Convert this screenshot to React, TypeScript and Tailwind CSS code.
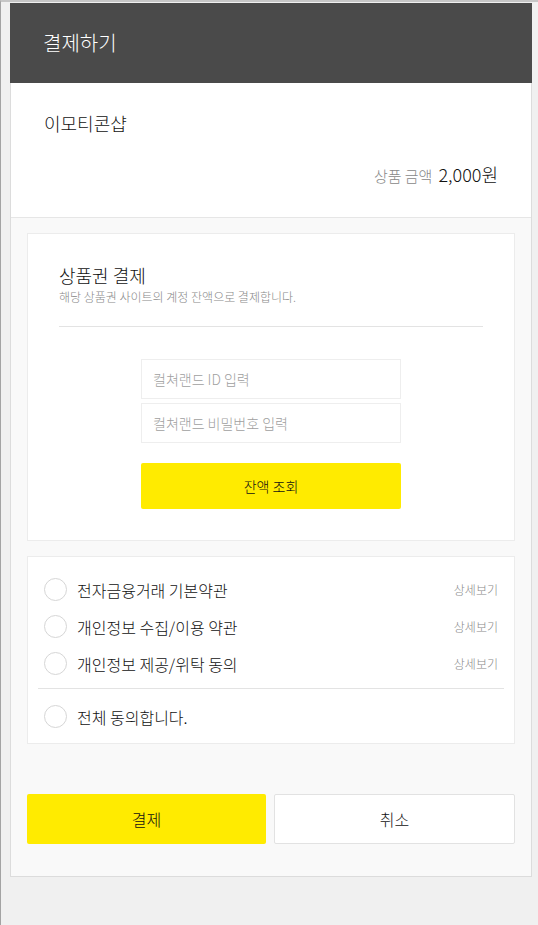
const font = { fontFamily: '"Noto Sans CJK KR", "Noto Sans", sans-serif' };

interface TermItem {
  label: string;
  detail?: boolean;
}

const terms: TermItem[] = [
  { label: "전자금융거래 기본약관", detail: true },
  { label: "개인정보 수집/이용 약관", detail: true },
  { label: "개인정보 제공/위탁 동의", detail: true },
];

function Circle() {
  return <span className="w-[23px] h-[23px] rounded-full border border-[#d6d6d6] bg-white shrink-0" />;
}

function TermRow({ item }: { item: TermItem }) {
  return (
    <div className="flex items-center h-[37px] px-4">
      <Circle />
      <span className="ml-[10px] text-[16px] leading-[20px] text-[#111] font-light">{item.label}</span>
      {item.detail && <span className="ml-auto text-[12px] leading-[16px] text-[#888] font-light">상세보기</span>}
    </div>
  );
}

export default function App() {
  return (
    <div
      style={font}
      className="min-h-[925px] bg-[#f0f0f0] border-l border-l-[#a3a3a3] border-t-2 border-t-[#c6c6c6] pt-px pl-[9px]"
    >
      <div className="w-[522px]">
        <header className="h-[80px] bg-[#4a4a4a] flex items-center pl-[33px]">
          <h1 className="text-white text-[20px] leading-[24px] font-light">결제하기</h1>
        </header>

        <div className="border-x border-b border-[#dcdcdc] bg-[#f9f9f9]">
          <section className="bg-white border-b border-[#e6e6e6] px-[33px] pt-[28px] pb-[31px]">
            <div className="text-[18px] leading-[24px] text-[#111] font-light">이모티콘샵</div>
            <div className="mt-[27px] flex justify-end items-baseline h-[24px] leading-[24px] font-light">
              <span className="text-[15px] text-[#888]">상품 금액</span>
              <span className="ml-[6px] text-[18px] text-[#111]">2,000원</span>
            </div>
          </section>

          <div className="px-4 pt-[15px]">
            <div className="bg-white border border-[#ececec] px-[31px] pt-[29px] pb-[31px] font-light">
              <h2 className="text-[18px] leading-[24px] text-[#111] font-light">상품권 결제</h2>
              <p className="mt-[2px] text-[12px] leading-[16px] text-[#888]">
                해당 상품권 사이트의 계정 잔액으로 결제합니다.
              </p>
              <div className="mt-[21px] border-t border-[#e3e3e3]" />
              <div className="mt-[32px] w-[260px] mx-auto flex flex-col gap-[4px]">
                <input
                  placeholder="컬쳐랜드 ID 입력"
                  className="h-[40px] border border-[#eeeeee] px-[11px] text-[14px] text-[#333] placeholder:text-[#a0a0a0] outline-none"
                />
                <input
                  type="password"
                  placeholder="컬쳐랜드 비밀번호 입력"
                  className="h-[40px] border border-[#eeeeee] px-[11px] text-[14px] text-[#333] placeholder:text-[#a0a0a0] outline-none"
                />
                <button className="mt-[16px] h-[46px] rounded-[2px] bg-[#ffeb00] text-[14px] text-[#111]">
                  잔액 조회
                </button>
              </div>
            </div>

            <div className="mt-[15px] bg-white border border-[#ececec] pt-[14px] pb-[8px]">
              {terms.map((item) => (
                <TermRow key={item.label} item={item} />
              ))}
              <div className="mx-[10px] mt-[6px] mb-[9px] border-t border-[#e3e3e3]" />
              <TermRow item={{ label: "전체 동의합니다." }} />
            </div>

            <div className="mt-[50px] pb-[32px] flex gap-2 font-light">
              <button className="flex-1 h-[50px] rounded-[2px] bg-[#ffeb00] text-[16px] text-[#111]">결제</button>
              <button className="flex-1 h-[50px] rounded-[2px] bg-white border border-[#e2e2e2] text-[16px] text-[#111]">
                취소
              </button>
            </div>
          </div>
        </div>
      </div>
    </div>
  );
}
